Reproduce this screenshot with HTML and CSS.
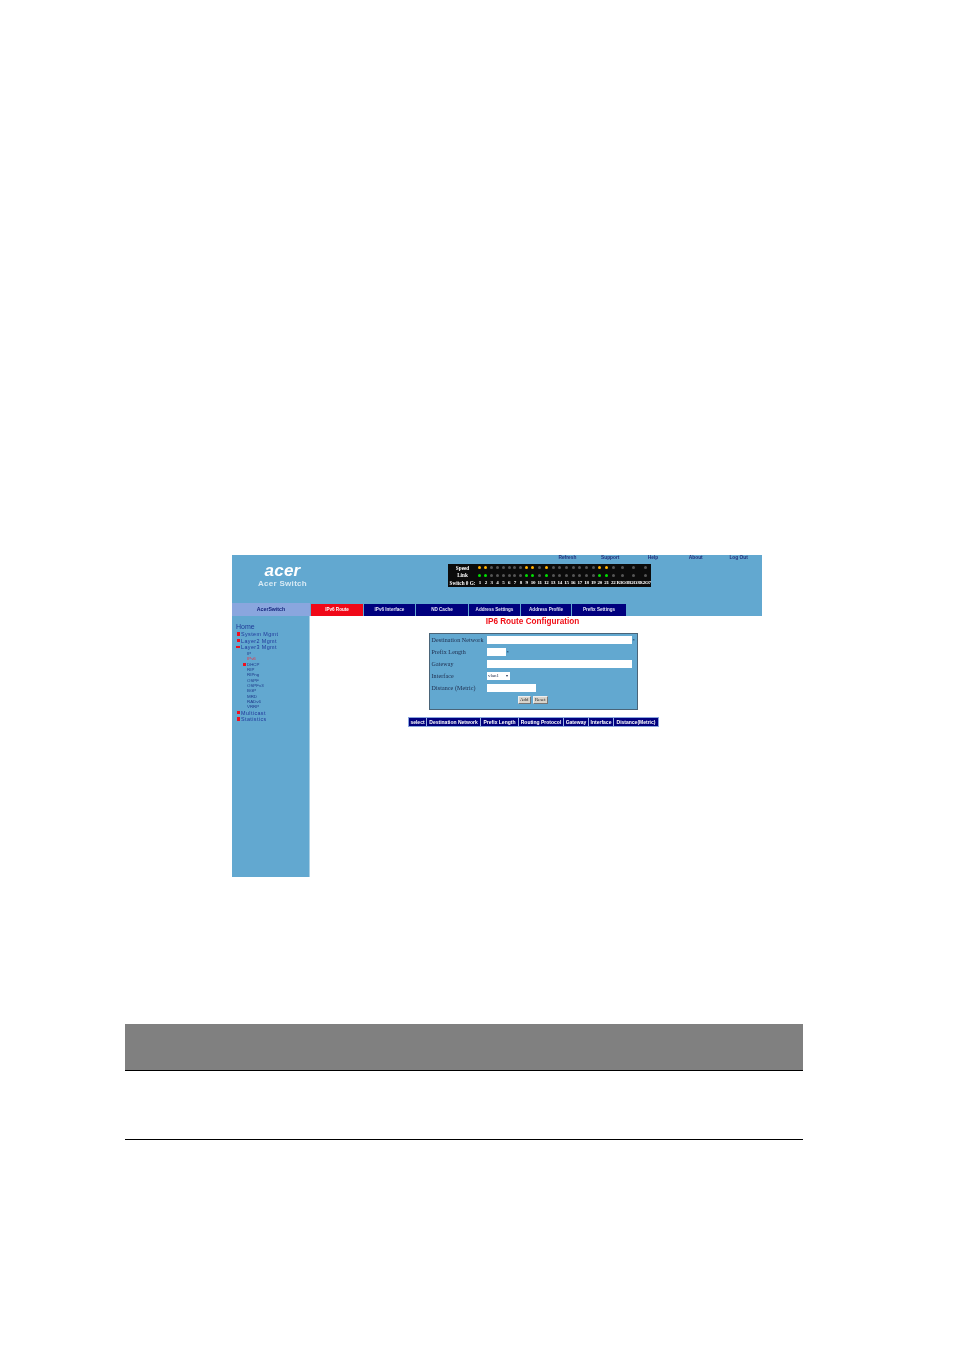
FILE: index.html
```html
<!DOCTYPE html>
<html lang="en">
<head>
<meta charset="utf-8">
<title>IP6 Route Configuration</title>
<link rel="stylesheet" href="styles.css">
</head>
<body>
<main class="page">
  <div class="shot">
    <header class="band">
      <div class="band-top">
        <div class="brand">
          <div class="logo">acer</div>
          <div class="brand-name">Acer Switch</div>
        </div>
        <div class="band-right">
          <nav class="links">
            <span>Refresh</span><span>Support</span><span>Help</span><span>About</span><span>Log Out</span>
          </nav>
          <div class="ports">
            <span class="lab">Speed</span>
            <i class="on-o"></i><i class="on-o"></i><i></i><i></i><i></i><i></i><i></i><i></i><i class="on-o"></i><i class="on-o"></i><i></i><i class="on-o"></i><i></i><i></i><i></i><i></i><i></i><i></i><i></i><i class="on-o"></i><i class="on-o"></i><i></i><i></i><i></i><i></i>
            <span class="lab">Link</span>
            <i class="on-g"></i><i class="on-g"></i><i></i><i></i><i></i><i></i><i></i><i></i><i class="on-g"></i><i class="on-g"></i><i></i><i class="on-g"></i><i></i><i></i><i></i><i></i><i></i><i></i><i></i><i class="on-g"></i><i class="on-g"></i><i></i><i></i><i></i><i></i>
            <span class="lab">Switch 0 G:</span>
            <b>1</b><b>2</b><b>3</b><b>4</b><b>5</b><b>6</b><b>7</b><b>8</b><b>9</b><b>10</b><b>11</b><b>12</b><b>13</b><b>14</b><b>15</b><b>16</b><b>17</b><b>18</b><b>19</b><b>20</b><b>21</b><b>22</b><b>R3O3</b><b>R2O3</b><b>R2O7</b>
          </div>
        </div>
      </div>
      <div class="tab-row">
        <div class="side-title">AcerSwitch</div>
        <nav class="tabs">
          <span class="tab tab-active tab-w52">IPv6 Route</span>
          <span class="tab tab-w51">IPv6 Interface</span>
          <span class="tab tab-w52">ND Cache</span>
          <span class="tab tab-w51">Address Settings</span>
          <span class="tab tab-w50">Address Profile</span>
          <span class="tab tab-w54">Prefix Settings</span>
        </nav>
      </div>
    </header>
    <div class="body">
      <aside class="sidebar">
        <div class="home">Home</div>
        <ul class="menu">
          <li class="closed">System Mgmt</li>
          <li class="closed">Layer2 Mgmt</li>
          <li class="open">Layer3 Mgmt</li>
        </ul>
        <ul class="submenu">
          <li>IP</li>
          <li class="current">IPv6</li>
          <li class="sub-closed">DHCP</li>
          <li>RIP</li>
          <li>RIPng</li>
          <li>OSPF</li>
          <li>OSPFv3</li>
          <li>BGP</li>
          <li>MRD</li>
          <li>RADv6</li>
          <li>VRRP</li>
        </ul>
        <ul class="menu">
          <li class="closed">Multicast</li>
          <li class="closed">Statistics</li>
        </ul>
      </aside>
      <section class="content">
        <h1 class="title">IP6 Route Configuration</h1>
        <form class="panel">
          <div class="row"><label>Destination Network</label><span class="field f-145"></span><em>*</em></div>
          <div class="row"><label>Prefix Length</label><span class="field f-20"></span><em>*</em></div>
          <div class="row"><label>Gateway</label><span class="field f-145"></span></div>
          <div class="row"><label>Interface</label><span class="field f-23 sel">vlan1<small>&#9662;</small></span></div>
          <div class="row"><label>Distance (Metric)</label><span class="field f-49"></span></div>
          <div class="actions"><span class="btn btn-add">Add</span><span class="btn">Reset</span></div>
        </form>
        <div class="table">
          <span class="c17">select</span><span class="c54">Destination Network</span><span class="c38">Prefix Length</span><span class="c45">Routing Protocol</span><span class="c25">Gateway</span><span class="c25">Interface</span><span class="c44">Distance(Metric)</span>
        </div>
      </section>
    </div>
  </div>
  <div class="doc-table">
    <div class="doc-head"></div>
    <div class="doc-row"></div>
  </div>
</main>
</body>
</html>
```
FILE: styles.css
```css
* { box-sizing: border-box; }
html, body { margin: 0; padding: 0; background: #fff; }
body { font-family: "Liberation Sans", Arial, sans-serif; }
.page { width: 954px; height: 1369px; padding-top: 555px; overflow: hidden; }

.shot { width: 530px; height: 322px; margin-left: 232px; background: #fff; filter: blur(0.5px); }

.band { height: 61px; background: #62a8d0; display: flex; flex-direction: column; }
.band-top { height: 48px; display: flex; }
.brand { flex: none; width: 101px; padding-top: 8px; text-align: center; color: #eef6fb; }
.logo { font-size: 17px; line-height: 16px; font-style: italic; font-weight: 700; letter-spacing: 0.2px; color: #fff; }
.brand-name { font-size: 8px; line-height: 9px; letter-spacing: 0.3px; font-weight: 700; color: #d8eaf4; white-space: nowrap; }

.band-right { flex: 1; display: flex; flex-direction: column; }
.links { display: flex; height: 9px; padding-left: 213px; font-size: 4.8px; line-height: 5px; font-weight: 700; color: #20307c; }
.links span { flex: none; width: 42.8px; text-align: center; white-space: nowrap; }

.ports { width: 203px; height: 23px; margin-left: 115px; background: #0b0b0b; display: grid; align-items: center; justify-items: center;
  grid-template-columns: 29px repeat(9, 5.85px) repeat(13, 6.7px) 11.4px 11.4px 11.5px; grid-auto-rows: 7.6px; color: #fff; font-family: "Liberation Serif", serif; font-size: 5px; font-weight: 700; }
.ports .lab { justify-self: center; white-space: nowrap; font-size: 5.2px; }
.ports i { width: 3px; height: 3px; border-radius: 50%; background: #555; }
.ports i.on-o { background: #ffb000; }
.ports i.on-g { background: #00e000; }
.ports b { font-weight: 700; font-size: 5px; white-space: nowrap; letter-spacing: -0.25px; }

.tab-row { height: 13px; display: flex; }
.side-title { width: 78px; background: #8aa6de; color: #14247c; font-size: 5.2px; font-weight: 700; line-height: 13px; text-align: center; }
.tabs { display: flex; padding-left: 1px; gap: 1px; }
.tab { background: #00007e; color: #dfe4f5; font-size: 4.6px; font-weight: 700; line-height: 12px; height: 12px; text-align: center; margin-top: 0.5px; }
.tab-active { background: #f00818; color: #fff; }
.tab-w50 { width: 50px; }
.tab-w51 { width: 51px; }
.tab-w52 { width: 52px; }
.tab-w54 { width: 54px; }

.body { height: 261px; display: flex; }
.sidebar { width: 78px; background: #62a8d0; border-right: 1px solid #a9cfe5; padding: 6.5px 0 0 4px; }
.home { font-size: 7px; line-height: 8.6px; color: #1f3a96; }
.menu, .submenu { list-style: none; margin: 0; padding: 0; }
.menu li { font-size: 5.4px; line-height: 6.6px; color: #20389a; padding-left: 5px; position: relative; letter-spacing: 0.4px; }
.menu li::before, .sub-closed::before { content: ""; position: absolute; left: 1px; top: 1px; width: 2.5px; height: 3.5px; background: #f01020; }
.menu li.open::before { left: 0; top: 2px; width: 4px; height: 2px; }
.submenu { padding-left: 11px; margin-bottom: 0; }
.submenu li { font-size: 4.4px; line-height: 5.35px; color: #1f3a8a; position: relative; }
.submenu li.current { color: #f03040; }
.sub-closed::before { left: -4px; top: 1px; }

.content { flex: 1; display: flex; flex-direction: column; align-items: flex-start; }
.title { margin: 0; padding-top: 0.5px; width: 445px; text-align: center; color: #f01018; font-size: 8.2px; line-height: 9px; font-weight: 700; }
.panel { width: 209px; height: 77px; margin: 7.5px 0 0 119px; background: #62a8d0; border: 1.5px solid #4a6478; padding: 0 0 0 1.5px; font-family: "Liberation Serif", serif; color: #1d2a4a; font-size: 6px; }
.row { display: flex; align-items: center; height: 12px; }
.row label { width: 55px; white-space: nowrap; letter-spacing: 0.1px; }
.row em { font-style: normal; font-size: 5px; color: #102040; margin-left: 1px; }
.field { display: block; height: 8px; background: #fff; }
.f-145 { width: 145px; }
.f-20 { width: 19px; }
.f-23 { width: 23px; }
.f-49 { width: 49px; }
.sel { display: flex; align-items: center; justify-content: space-between; padding: 0 1.5px; font-size: 5px; line-height: 8px; }
.sel small { font-size: 4px; }
.actions { display: flex; justify-content: center; gap: 2px; margin-top: 2px; padding-right: 3px; }
.btn { background: #d8d4cc; border: 1px solid #eee; border-right-color: #777; border-bottom-color: #777; height: 8px; width: 15px; font-size: 4.8px; line-height: 6px; text-align: center; color: #222; }
.btn-add { width: 13px; }

.table { margin: 7px 0 0 98px; height: 10px; width: 251px; display: flex; background: #00007e; border: 1px solid #8aa6de; color: #fff; font-size: 5px; font-weight: 700; line-height: 8px; text-align: center; white-space: nowrap; }
.table span { border-right: 1px solid #9db4e6; display: block; overflow: hidden; }
.table span:last-child { border-right: 0; }
.c17 { width: 18px; }
.c54 { width: 54px; }
.c38 { width: 38px; }
.c45 { width: 45px; }
.c25 { width: 25px; }
.c44 { width: 44px; }

.doc-table { width: 678px; margin: 147px 0 0 125px; }
.doc-head { height: 47px; background: #808080; border-bottom: 1px solid #000; }
.doc-row { height: 69px; border-bottom: 1px solid #000; }
```
